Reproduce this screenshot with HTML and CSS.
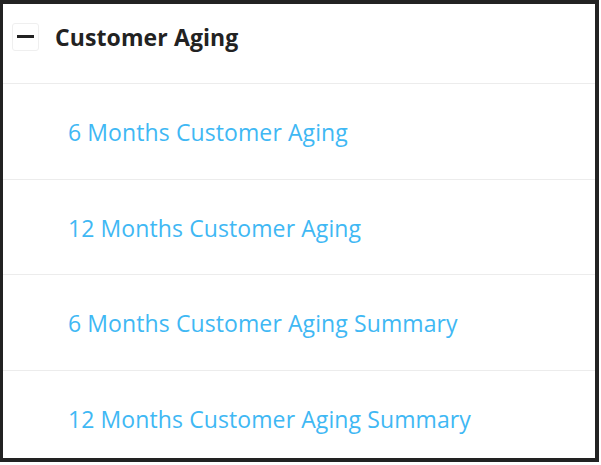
FILE: index.html
```html
<!DOCTYPE html>
<html>
<head>
<meta charset="utf-8">
<link rel="stylesheet" href="styles.css">
</head>
<body>
<div class="panel">
  <div class="panel-header">
    <span class="toggle"><span class="toggle-bar"></span></span>
    <span class="title">Customer Aging</span>
  </div>
  <ul class="report-list">
    <li class="report-item"><a class="report-link">6 Months Customer Aging</a></li>
    <li class="report-item"><a class="report-link">12 Months Customer Aging</a></li>
    <li class="report-item"><a class="report-link">6 Months Customer Aging Summary</a></li>
    <li class="report-item"><a class="report-link">12 Months Customer Aging Summary</a></li>
  </ul>
</div>
</body>
</html>
```
FILE: styles.css
```css
html, body {
  margin: 0;
  padding: 0;
  background: #ffffff;
}
.panel {
  box-sizing: border-box;
  width: 599px;
  height: 462px;
  border-style: solid;
  border-color: #222222;
  border-width: 4px 4px 4px 3px;
  background: #ffffff;
  font-family: "Open Sans", "Noto Sans", sans-serif;
  overflow: hidden;
}
.panel-header {
  display: flex;
  align-items: center;
  height: 80px;
  padding-left: 9px;
  padding-bottom: 14px;
  border-bottom: 1px solid #ececec;
  box-sizing: border-box;
}
.toggle {
  box-sizing: border-box;
  width: 27px;
  height: 28px;
  border: 1px solid #efefef;
  border-radius: 3px;
  display: flex;
  align-items: center;
  justify-content: center;
}
.toggle-bar {
  width: 17px;
  height: 3px;
  background: #222222;
}
.title {
  margin-left: 16px;
  font-size: 23px;
  font-weight: 700;
  color: #222222;
  letter-spacing: 0.1px;
}
.report-list {
  list-style: none;
  margin: 0;
  padding: 0;
}
.report-item {
  box-sizing: border-box;
  height: 95.5px;
  display: flex;
  align-items: center;
  padding-left: 65px;
  border-bottom: 1px solid #ececec;
}
.report-item:last-child {
  border-bottom: none;
}
.report-link {
  font-size: 23px;
  color: #3fb8f4;
  margin-top: 2px;
  letter-spacing: 0.1px;
}
```
